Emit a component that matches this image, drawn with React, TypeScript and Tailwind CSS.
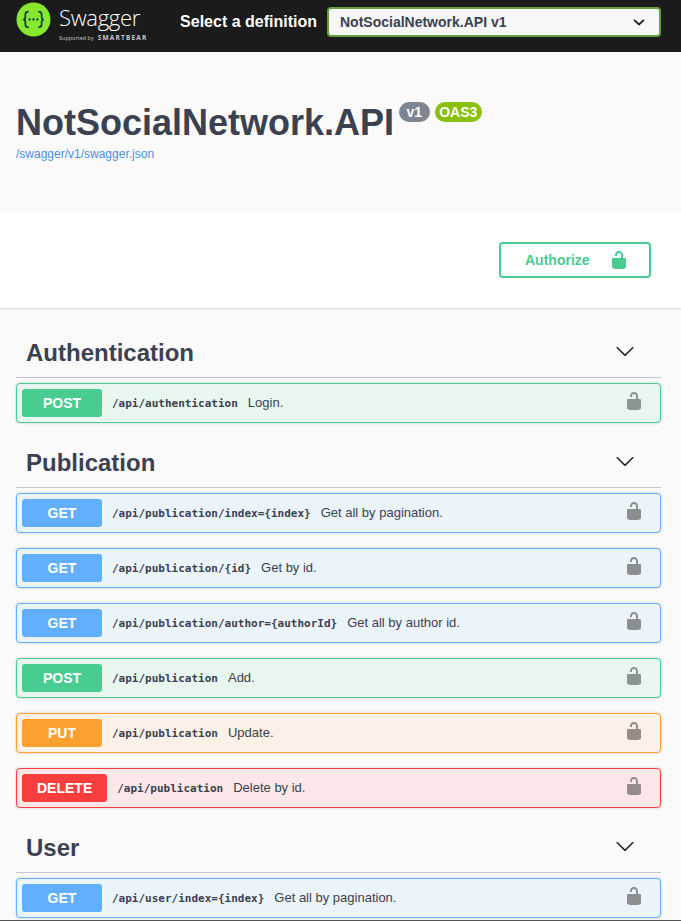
const sans = { fontFamily: '"Liberation Sans", Arial, sans-serif' }

type Op = {
  method: 'GET' | 'POST' | 'PUT' | 'DELETE'
  path: string
  desc: string
}

const methodStyles = {
  GET: { box: 'border-[#61affe] bg-[#ebf3fb]', badge: 'bg-[#61affe]', lock: 'text-[#8b8f90]' },
  POST: { box: 'border-[#49cc90] bg-[#e7f6ef]', badge: 'bg-[#49cc90]', lock: 'text-[#8b9590]' },
  PUT: { box: 'border-[#fca130] bg-[#fbf1e6]', badge: 'bg-[#fca130]', lock: 'text-[#978b85]' },
  DELETE: { box: 'border-[#f93e3e] bg-[#fbe7e7]', badge: 'bg-[#f93e3e]', lock: 'text-[#978b8b]' },
}

const groups: { name: string; ops: Op[] }[] = [
  {
    name: 'Authentication',
    ops: [{ method: 'POST', path: '/api/authentication', desc: 'Login.' }],
  },
  {
    name: 'Publication',
    ops: [
      { method: 'GET', path: '/api/publication/index={index}', desc: 'Get all by pagination.' },
      { method: 'GET', path: '/api/publication/{id}', desc: 'Get by id.' },
      { method: 'GET', path: '/api/publication/author={authorId}', desc: 'Get all by author id.' },
      { method: 'POST', path: '/api/publication', desc: 'Add.' },
      { method: 'PUT', path: '/api/publication', desc: 'Update.' },
      { method: 'DELETE', path: '/api/publication', desc: 'Delete by id.' },
    ],
  },
  {
    name: 'User',
    ops: [{ method: 'GET', path: '/api/user/index={index}', desc: 'Get all by pagination.' }],
  },
]

function Lock({ className }: { className: string }) {
  return (
    <svg viewBox="0 0 20 20" className={className} fill="currentColor">
      <path d="M15.8 8H14V5.6C14 2.703 12.665 1 10 1 7.334 1 6 2.703 6 5.6V6h2v-.801C8 3.754 8.797 3 10 3c1.203 0 2 .754 2 2.199V8H4c-.553 0-1 .646-1 1.199V17c0 .549.428 1.139.951 1.307l1.197.387C5.672 18.861 6.45 19 7 19h6c.55 0 1.327-.139 1.852-.307l1.197-.387c.523-.168.951-.758.951-1.307V9.199C17 8.646 16.352 8 15.8 8z" />
    </svg>
  )
}

function Chevron() {
  return (
    <svg viewBox="0 0 20 20" className="w-5 h-5 -mt-1 text-[#1f1f1f]" fill="currentColor">
      <path d="M17.418 6.109c.272-.268.709-.268.979 0s.271.701 0 .969l-7.908 7.83c-.27.268-.707.268-.979 0l-7.908-7.83c-.27-.268-.27-.701 0-.969.271-.268.709-.268.979 0L10 13.25l7.418-7.141z" />
    </svg>
  )
}

function Logo() {
  return (
    <div className="flex items-start gap-[8px] pt-[2px]">
      <svg viewBox="0 0 36 36" className="w-[35px] h-[35px]">
        <circle cx="18" cy="18" r="17.5" fill="#85ea2d" />
        <path
          d="M13 10c-2.6 0-3.4 1.2-3.4 3.2v2.6c0 1.4-.7 2.2-2.2 2.2 1.5 0 2.2.8 2.2 2.2v2.6c0 2 .8 3.2 3.4 3.2M23 10c2.6 0 3.4 1.2 3.4 3.2v2.6c0 1.4.7 2.2 2.2 2.2-1.5 0-2.2.8-2.2 2.2v2.6c0 2-.8 3.2-3.4 3.2"
          fill="none"
          stroke="#173647"
          strokeWidth="1.8"
        />
        <circle cx="14" cy="18" r="1.2" fill="#173647" />
        <circle cx="18" cy="18" r="1.2" fill="#173647" />
        <circle cx="22" cy="18" r="1.2" fill="#173647" />
      </svg>
      <div className="flex flex-col text-white" style={{ fontFamily: '"Open Sans", sans-serif' }}>
        <div className="text-[22px] leading-[28px] pt-[1px] font-light tracking-[-0.3px]">
          Swagger<span className="text-[6px] leading-none text-[#999]">.</span>
        </div>
        <div className="flex items-center gap-[4px] h-[8px] mt-[3px] whitespace-nowrap text-[#c8c8c8]">
          <span className="text-[5.5px]">Supported by</span>
          <span className="text-[6.5px] font-bold tracking-[1.2px]">SMARTBEAR</span>
        </div>
      </div>
    </div>
  )
}

function OpRow({ op }: { op: Op }) {
  const s = methodStyles[op.method]
  return (
    <div className={`flex items-center h-10 border rounded-[4px] p-[5px] mb-[15px] shadow-[0_0_3px_rgba(0,0,0,0.19)] ${s.box}`}>
      <div className={`shrink-0 min-w-20 px-[15px] h-7 flex items-center justify-center rounded-[3px] text-white text-sm font-bold ${s.badge}`}>
        {op.method}
      </div>
      <span className="px-[10px] pt-[2px] text-[11px] font-semibold text-[#3b4151]" style={{ fontFamily: '"DejaVu Sans Mono", monospace' }}>
        {op.path}
      </span>
      <span className="text-[13px] text-[#3b4151] flex-1">{op.desc}</span>
      <Lock className={`w-5 h-5 -mt-1 mr-[11px] ${s.lock}`} />
    </div>
  )
}

export default function App() {
  return (
    <div className="bg-[#fafafa] h-[921px] overflow-hidden border-b border-[#555555]" style={sans}>
      <div className="h-[52px] bg-[#1b1b1b] flex items-start pl-4 pr-5">
        <Logo />
        <div className="ml-auto flex items-center gap-[10px] pt-[7px]">
          <span className="text-white text-base font-bold">Select a definition</span>
          <div className="w-[334px] h-[30px] bg-[#f7f7f7] border-2 border-[#62a03f] rounded-[4px] flex items-center justify-between pl-[11px] pr-[13px]">
            <span className="text-sm font-bold text-[#3b4151]">NotSocialNetwork.API v1</span>
            <svg viewBox="0 0 20 20" className="w-[14px] h-[14px]" fill="none" stroke="#1f1f1f" strokeWidth="2.6">
              <path d="M3 7l7 6.5L17 7" />
            </svg>
          </div>
        </div>
      </div>

      <div className="h-[160px] pl-4 pt-[48px]">
        <div className="flex items-start">
          <h1 className="text-4xl leading-[45px] font-bold text-[#3b4151]">NotSocialNetwork.API</h1>
          <span className="ml-[5px] mt-[2px] h-5 px-[7.5px] rounded-[10px] bg-[#7d8492] text-white text-sm font-bold flex items-center">v1</span>
          <span className="ml-[5px] mt-[2px] h-5 px-[4.5px] rounded-[10px] bg-[#89bf04] text-white text-sm font-bold flex items-center">OAS3</span>
        </div>
        <div className="text-xs leading-[14px] text-[#4990e2] mt-[2px]">/swagger/v1/swagger.json</div>
      </div>

      <div className="h-24 bg-white shadow-[0_1px_2px_0_rgba(0,0,0,0.15)] flex items-center justify-end pr-[30px]">
        <div className="w-[152px] h-9 border-2 border-[#49cc90] rounded-[4px] flex items-center pl-[24px] gap-[19px] text-[#49cc90] text-sm font-bold">
          <span>Authorize</span>
          <Lock className="w-5 h-5 text-[#49cc90]" />
        </div>
      </div>

      <div className="pl-4 pr-5 pt-5">
        {groups.map((group) => (
          <div key={group.name}>
            <div className="flex items-center justify-between h-[50px] border-b border-[#c4c6ca] pl-[10px] pr-[26px]">
              <span className="text-2xl font-bold text-[#3b4151]">{group.name}</span>
              <Chevron />
            </div>
            <div className="pt-[5px]">
              {group.ops.map((op) => (
                <OpRow key={op.method + op.path} op={op} />
              ))}
            </div>
          </div>
        ))}
      </div>
    </div>
  )
}
